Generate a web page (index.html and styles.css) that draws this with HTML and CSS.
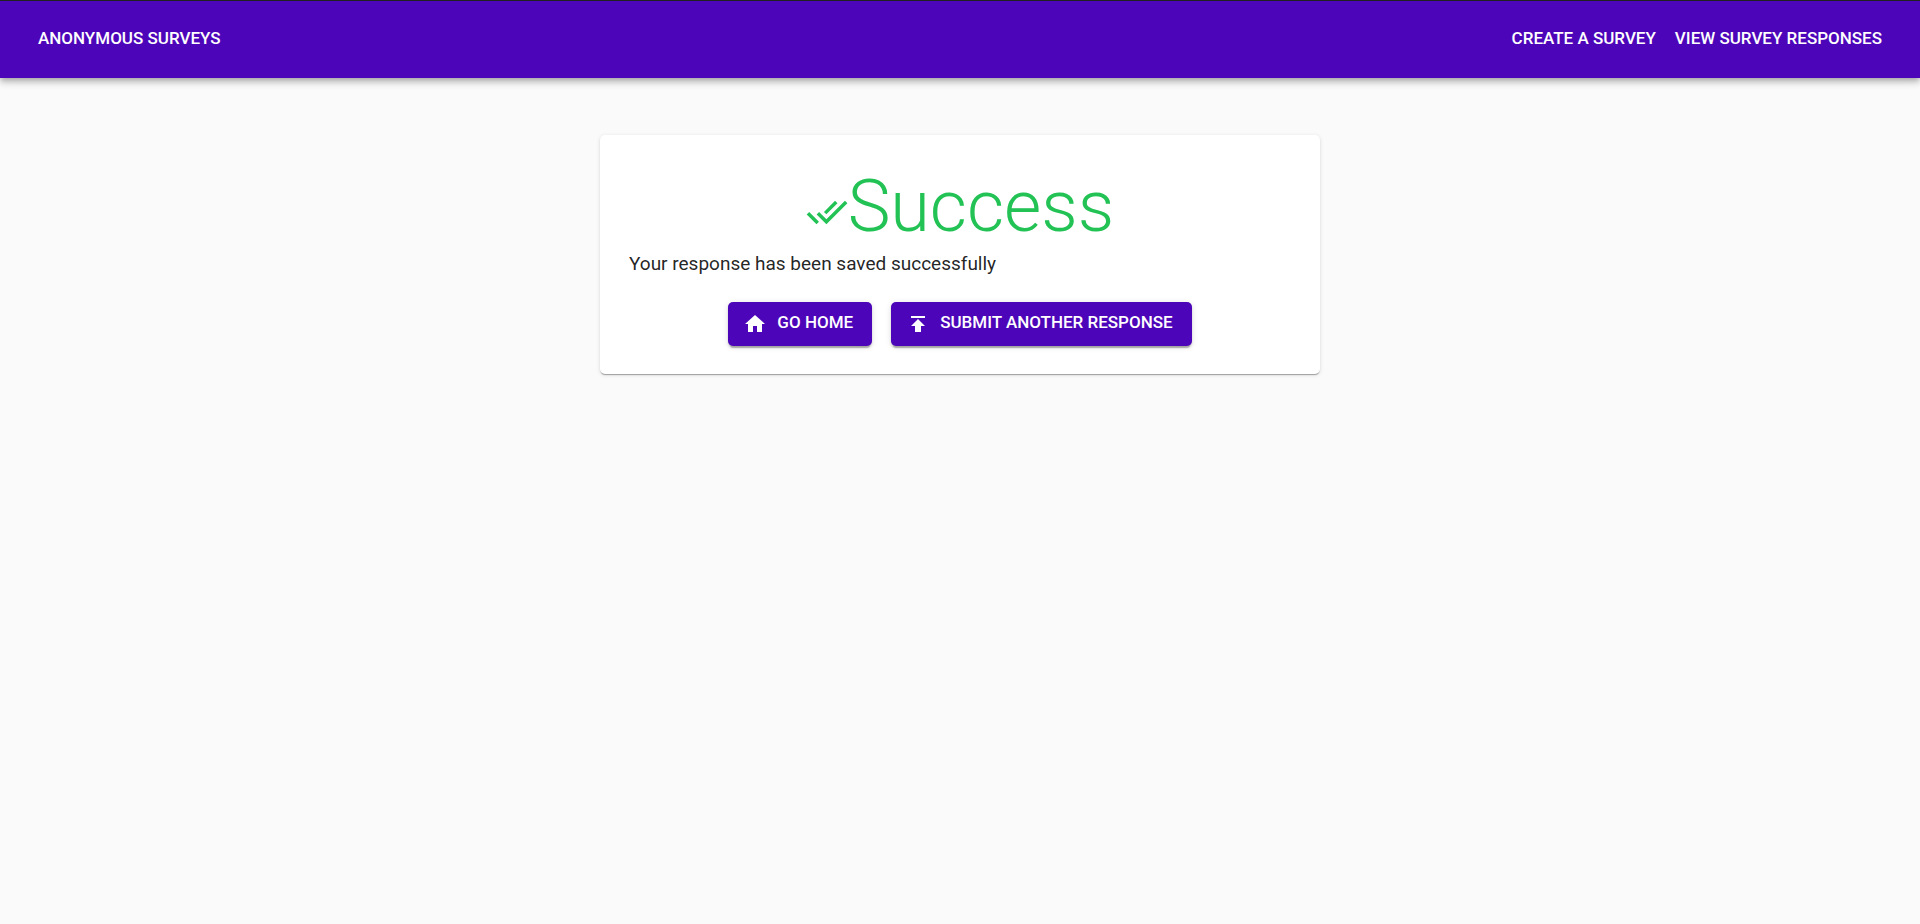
FILE: index.html
```html
<!DOCTYPE html>
<html lang="en">
<head>
<meta charset="utf-8">
<meta name="viewport" content="width=device-width, initial-scale=1">
<title>Anonymous Surveys</title>
<link rel="stylesheet" href="styles.css">
</head>
<body>
<header class="app-bar">
  <a class="nav-link" href="#home">Anonymous Surveys</a>
  <nav class="nav">
    <a class="nav-link" href="#create">Create a survey</a>
    <a class="nav-link" href="#responses">View survey responses</a>
  </nav>
</header>
<main class="content">
  <section class="card">
    <h1 class="title"><svg class="title-icon" viewBox="0 0 24 24" aria-hidden="true"><path d="M18 7l-1.41-1.41-6.34 6.34 1.41 1.41L18 7zm4.24-1.41L11.66 16.17 7.48 12l-1.41 1.41L11.66 19l12-12-1.42-1.41zM.41 13.41L6 19l1.41-1.41L1.83 12 .41 13.41z"/></svg>Success</h1>
    <p class="message">Your response has been saved successfully</p>
    <div class="actions">
      <button class="button" type="button"><svg class="button-icon" viewBox="0 0 24 24" aria-hidden="true"><path d="M10 20v-6h4v6h5v-8h3L12 3 2 12h3v8z"/></svg><span class="button-label">Go home</span></button>
      <button class="button" type="button"><svg class="button-icon" viewBox="0 0 24 24" aria-hidden="true"><path d="M5 4v2h14V4H5zm0 10h4v6h6v-6h4l-7-7-7 7z"/></svg><span class="button-label">Submit another response</span></button>
    </div>
  </section>
</main>
</body>
</html>
```
FILE: styles.css
```css
* {
  box-sizing: border-box;
}

body {
  margin: 0;
  background: #fafafa;
  color: rgba(0, 0, 0, 0.87);
  font-family: Roboto, "Liberation Sans", sans-serif;
}

.app-bar {
  display: flex;
  align-items: center;
  justify-content: space-between;
  padding: 22px 38px 25px;
  border-top: 1px solid #212121;
  background: #4d05b9;
  box-shadow: 0 2px 5px -1px rgba(0, 0, 0, 0.2), 0 5px 6px 0 rgba(0, 0, 0, 0.14), 0 1px 12px 0 rgba(0, 0, 0, 0.12);
}

.nav {
  display: flex;
  gap: 19px;
}

.nav-link {
  color: #fff;
  font-size: 17px;
  font-weight: 500;
  line-height: 30px;
  text-decoration: none;
  text-transform: uppercase;
}

.content {
  display: flex;
  justify-content: center;
  padding: 57px 24px;
}

.card {
  width: 100%;
  max-width: 720px;
  padding: 29px 29px 28px;
  border-radius: 5px;
  background: #fff;
  box-shadow: 0 2px 1px -1px rgba(0, 0, 0, 0.2), 0 1px 1px 0 rgba(0, 0, 0, 0.14), 0 1px 4px 0 rgba(0, 0, 0, 0.12);
}

.title {
  margin: 0;
  color: #22c255;
  font-size: 72px;
  font-weight: 300;
  line-height: 86px;
  text-align: center;
}

.title-icon {
  width: 42px;
  height: 42px;
  vertical-align: -2px;
  fill: currentColor;
}

.message {
  margin: 0;
  font-size: 19px;
  line-height: 27px;
}

.actions {
  display: flex;
  flex-wrap: wrap;
  justify-content: center;
  gap: 19px;
  margin-top: 25px;
}

.button {
  display: flex;
  align-items: center;
  gap: 10px;
  padding: 7px 19px 7px 15px;
  border: 0;
  border-radius: 5px;
  background: #4d05b9;
  box-shadow: 0 4px 1px -2px rgba(0, 0, 0, 0.2), 0 2px 2px 0 rgba(0, 0, 0, 0.14), 0 1px 6px 0 rgba(0, 0, 0, 0.12);
  color: #fff;
  font-family: inherit;
  font-size: 17px;
  font-weight: 500;
  text-transform: uppercase;
  cursor: pointer;
}

.button-icon {
  width: 24px;
  height: 24px;
  fill: currentColor;
}

.button-label {
  padding-bottom: 3px;
  line-height: 27px;
}
```
